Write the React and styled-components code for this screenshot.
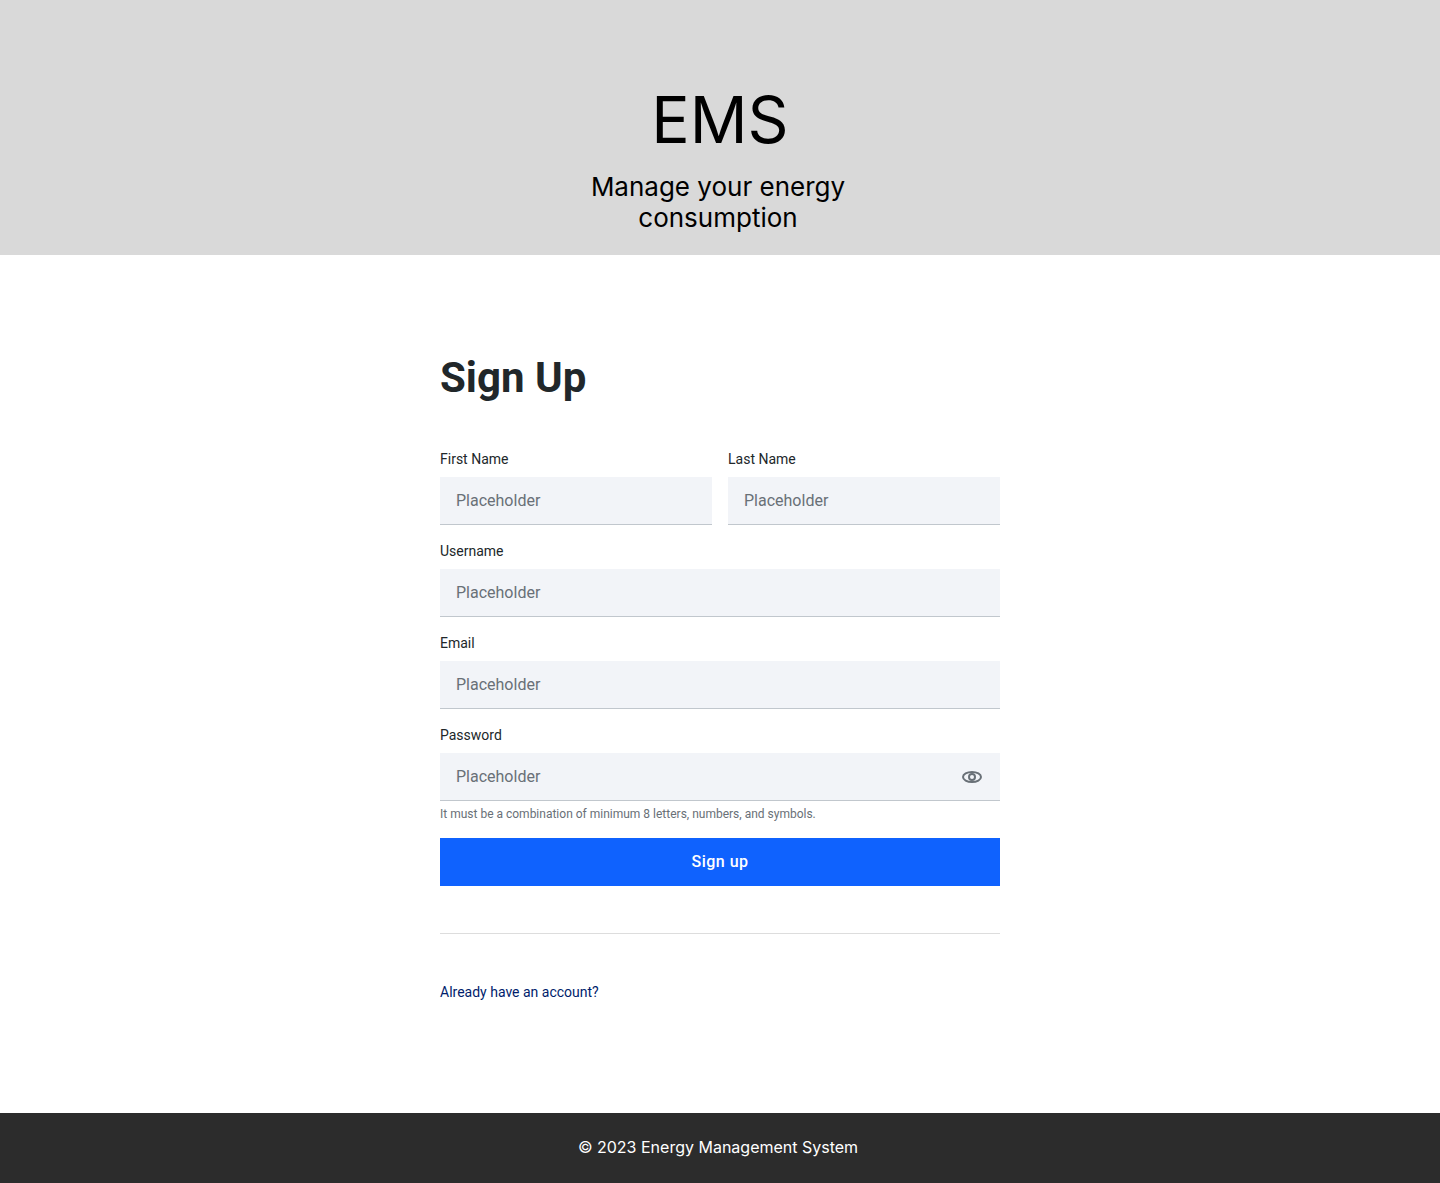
import React, { useState } from "react";
import styled, { createGlobalStyle } from "styled-components";

const GlobalStyle = createGlobalStyle`
  *, *::before, *::after { box-sizing: border-box; }
  body {
    margin: 0;
    background: #ffffff;
    color: #21272a;
    font-family: Roboto, "Liberation Sans", sans-serif;
    -webkit-font-smoothing: antialiased;
  }
`;

const Page = styled.div`
  display: flex;
  flex-direction: column;
  min-height: 100vh;
`;

const Hero = styled.header`
  display: flex;
  flex-direction: column;
  align-items: center;
  gap: 11px;
  padding: 80px 24px 22px;
  background: #d9d9d9;
  color: #000000;
  font-family: Inter, "Liberation Sans", sans-serif;
  text-align: center;
`;

const Brand = styled.p`
  margin: 0;
  font-size: 64px;
  line-height: 80px;
`;

const Tagline = styled.p`
  margin: 0;
  max-width: 320px;
  padding-right: 4px;
  font-size: 26px;
  line-height: 31px;
`;

const Main = styled.main`
  flex: 1;
  width: 100%;
  max-width: 608px;
  margin: 0 auto;
  padding: 100px 24px;
`;

const Title = styled.h1`
  margin: 0 0 48px;
  font-size: 42px;
  line-height: 46px;
  font-weight: 700;
`;

const Form = styled.form`
  display: flex;
  flex-direction: column;
  gap: 16px;
`;

const NameRow = styled.div`
  display: grid;
  grid-template-columns: 1fr 1fr;
  gap: 16px;
`;

const Field = styled.div`
  display: flex;
  flex-direction: column;
`;

const Label = styled.label`
  margin-bottom: 8px;
  font-size: 14px;
  line-height: 20px;
`;

const InputBox = styled.div`
  display: flex;
  align-items: center;
  height: 48px;
  padding: 0 16px;
  background: #f2f4f8;
  border-bottom: 1px solid #c1c7cd;
`;

const Input = styled.input`
  flex: 1;
  min-width: 0;
  height: 100%;
  padding: 0;
  border: 0;
  outline: 0;
  background: transparent;
  color: #21272a;
  font: inherit;
  font-size: 16px;

  &::placeholder { color: #697077; opacity: 1; }
`;

const IconButton = styled.button`
  display: flex;
  padding: 0;
  border: 0;
  background: none;
  color: #697077;
  cursor: pointer;
`;

const Hint = styled.p`
  margin: 6px 0 0;
  color: #697077;
  font-size: 12px;
  line-height: 15px;
`;

const SubmitButton = styled.button`
  height: 48px;
  padding: 0 16px 2px;
  border: 0;
  background: #0f62fe;
  color: #ffffff;
  font-family: inherit;
  font-size: 16px;
  font-weight: 500;
  letter-spacing: 0.5px;
  cursor: pointer;
`;

const Divider = styled.hr`
  margin: 47px 0 48px;
  border: 0;
  border-top: 1px solid #dddddd;
`;

const LoginLink = styled.a`
  color: #001d6c;
  font-size: 14px;
  line-height: 20px;
  text-decoration: none;
`;

const Footer = styled.footer`
  padding: 24px 28px 26px 24px;
  background: #2c2c2c;
  color: #ffffff;
  font-family: Inter, "Liberation Sans", sans-serif;
  font-size: 16px;
  line-height: 20px;
  text-align: center;
`;

function EyeIcon() {
  return (
    <svg width="24" height="24" viewBox="0 0 24 24" fill="none" stroke="currentColor" strokeWidth="2" aria-hidden="true">
      <ellipse cx="12" cy="12" rx="9" ry="5" />
      <circle cx="12" cy="12" r="3" />
    </svg>
  );
}

function TextField({ id, label, type = "text", action, hint }) {
  return (
    <Field>
      <Label htmlFor={id}>{label}</Label>
      <InputBox>
        <Input id={id} name={id} type={type} placeholder="Placeholder" aria-describedby={hint ? `${id}-hint` : undefined} />
        {action}
      </InputBox>
      {hint && <Hint id={`${id}-hint`}>{hint}</Hint>}
    </Field>
  );
}

export default function App() {
  const [visible, setVisible] = useState(false);

  return (
    <>
      <GlobalStyle />
      <Page>
        <Hero>
          <Brand>EMS</Brand>
          <Tagline>Manage your energy consumption</Tagline>
        </Hero>
        <Main>
          <Title>Sign Up</Title>
          <Form onSubmit={(event) => event.preventDefault()}>
            <NameRow>
              <TextField id="firstName" label="First Name" />
              <TextField id="lastName" label="Last Name" />
            </NameRow>
            <TextField id="username" label="Username" />
            <TextField id="email" label="Email" type="email" />
            <TextField
              id="password"
              label="Password"
              type={visible ? "text" : "password"}
              hint="It must be a combination of minimum 8 letters, numbers, and symbols."
              action={
                <IconButton
                  type="button"
                  aria-label={visible ? "Hide password" : "Show password"}
                  onClick={() => setVisible(!visible)}
                >
                  <EyeIcon />
                </IconButton>
              }
            />
            <SubmitButton type="submit">Sign up</SubmitButton>
          </Form>
          <Divider />
          <LoginLink href="#login">Already have an account?</LoginLink>
        </Main>
        <Footer>© 2023 Energy Management System</Footer>
      </Page>
    </>
  );
}
